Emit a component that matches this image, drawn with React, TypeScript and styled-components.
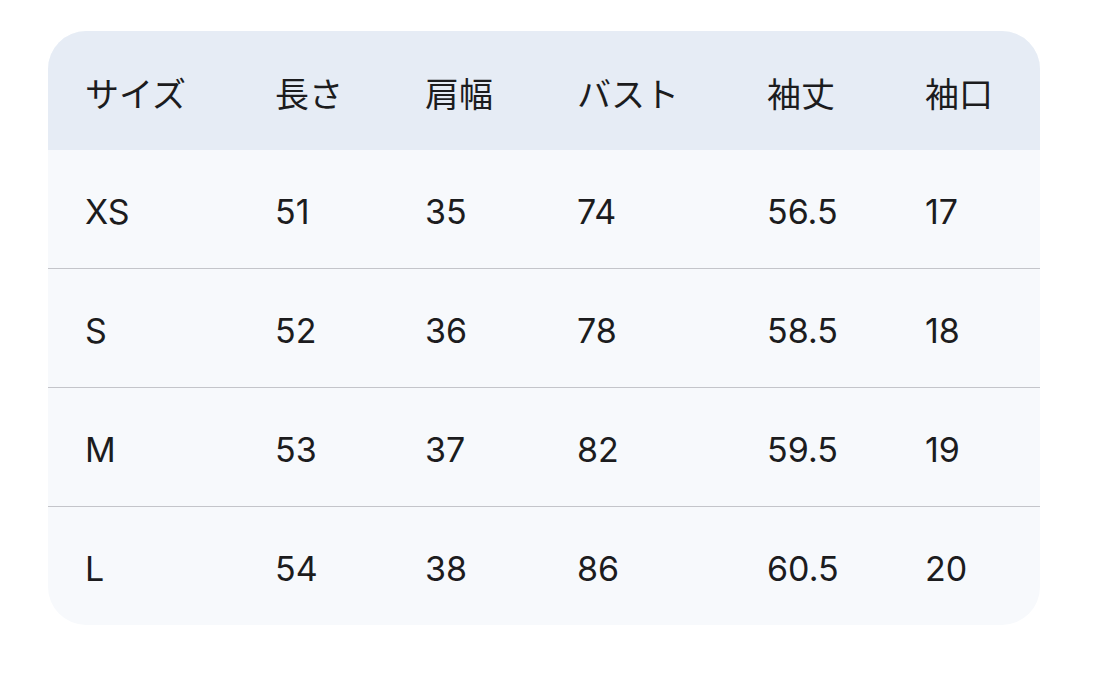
import styled, { createGlobalStyle } from 'styled-components';

const GlobalStyle = createGlobalStyle`
  html, body {
    margin: 0;
    padding: 0;
    background: #ffffff;
  }
  body {
    font-family: Inter, "Noto Sans CJK JP", sans-serif;
    color: #1c1c1e;
  }
`;

const Page = styled.div`
  padding: 31px 0 0 48px;
`;

const Card = styled.div`
  width: 992px;
  border-radius: 38px;
  overflow: hidden;
  background: #f7f9fc;
`;

const Table = styled.table`
  width: 100%;
  border-collapse: collapse;
  table-layout: fixed;
`;

const HeadRow = styled.tr`
  background: #e6ecf5;
  height: 119px;
`;

const BodyRow = styled.tr<{ $first?: boolean; $last?: boolean }>`
  height: ${(p) => (p.$first ? '118px' : '119px')};
  border-bottom: ${(p) => (p.$last ? 'none' : '1px solid #c4c5ca')};
`;

const HeadCell = styled.th<{ $w?: number }>`
  width: ${(p) => (p.$w ? `${p.$w}px` : 'auto')};
  padding: 4px 0 0 0;
  text-align: left;
  font-weight: 400;
  font-size: 34px;
  &:first-child {
    padding-left: 37px;
  }
`;

const Cell = styled.td`
  padding: 6px 0 0 0;
  font-size: 34px;
  &:first-child {
    padding-left: 37px;
  }
`;

const columns = [
  { label: 'サイズ', w: 190 },
  { label: '長さ', w: 150 },
  { label: '肩幅', w: 152 },
  { label: 'バスト', w: 190 },
  { label: '袖丈', w: 158 },
  { label: '袖口' },
];

const rows = [
  ['XS', '51', '35', '74', '56.5', '17'],
  ['S', '52', '36', '78', '58.5', '18'],
  ['M', '53', '37', '82', '59.5', '19'],
  ['L', '54', '38', '86', '60.5', '20'],
];

const App = () => {
  return (
    <Page>
      <GlobalStyle />
      <Card>
        <Table>
          <thead>
            <HeadRow>
              {columns.map((c) => (
                <HeadCell key={c.label} $w={c.w}>
                  {c.label}
                </HeadCell>
              ))}
            </HeadRow>
          </thead>
          <tbody>
            {rows.map((r, i) => (
              <BodyRow key={r[0]} $first={i === 0} $last={i === rows.length - 1}>
                {r.map((v, j) => (
                  <Cell key={j}>{v}</Cell>
                ))}
              </BodyRow>
            ))}
          </tbody>
        </Table>
      </Card>
    </Page>
  );
};

export default App;
